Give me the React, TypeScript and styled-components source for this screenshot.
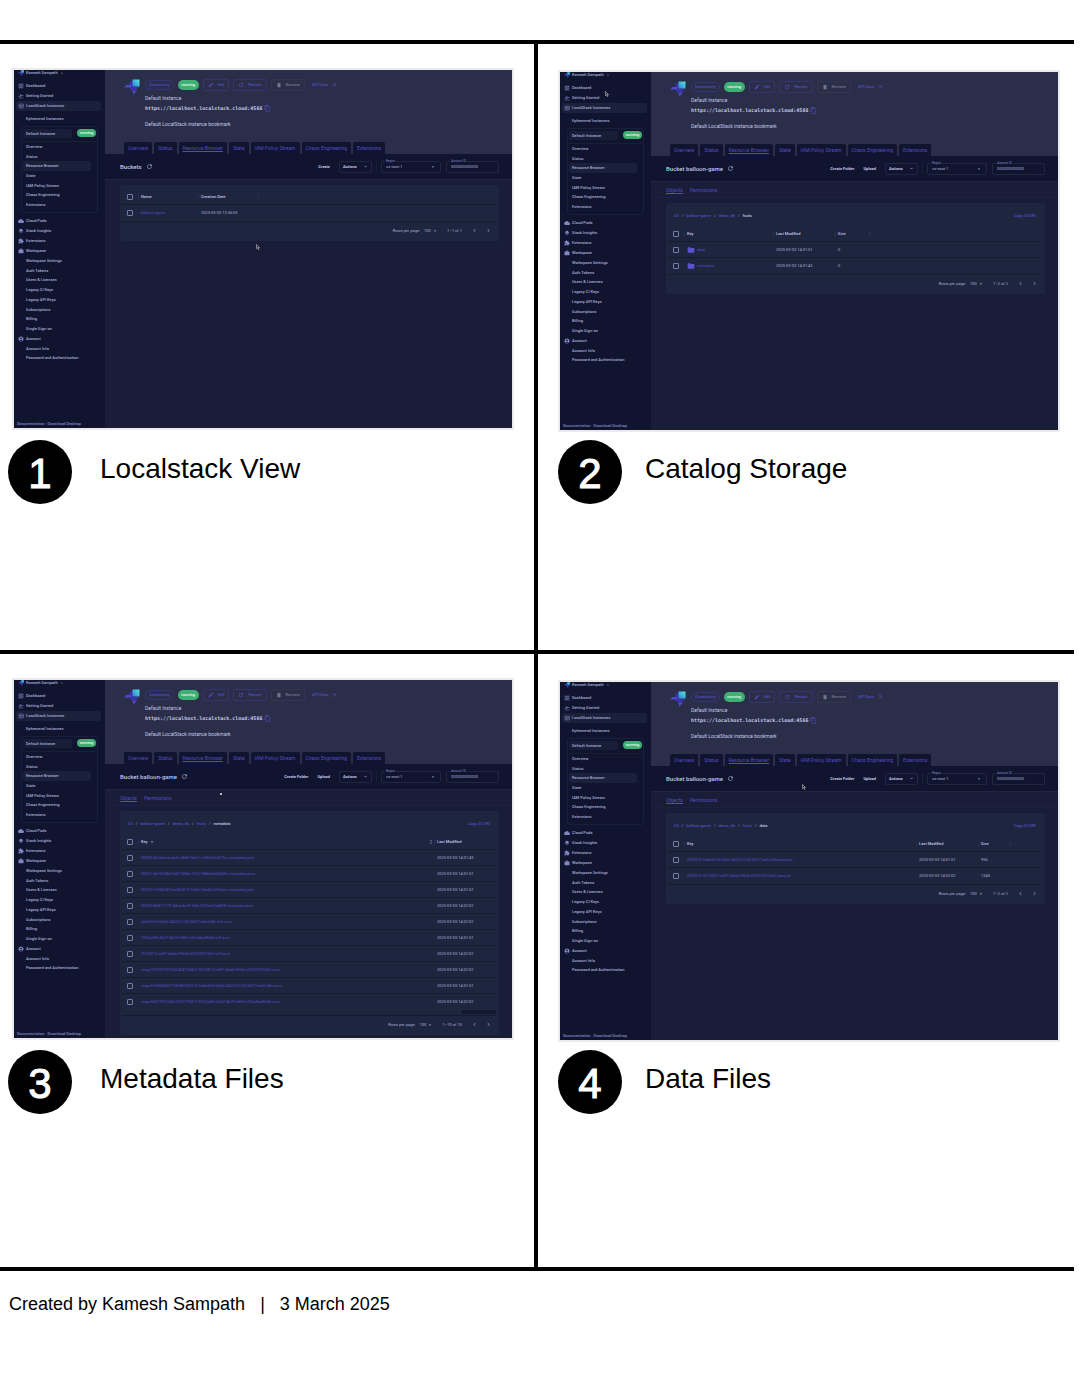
import React, { useId } from "react";
import styled, { createGlobalStyle, css } from "styled-components";
import {
  MdAccountCircle,
  MdArrowDropDown,
  MdArrowOutward,
  MdArrowUpward,
  MdChevronLeft,
  MdChevronRight,
  MdCloud,
  MdContentCopy,
  MdDelete,
  MdEdit,
  MdExtension,
  MdFlightTakeoff,
  MdFolder,
  MdKeyboardArrowDown,
  MdLayers,
  MdMoreVert,
  MdOutlineDashboard,
  MdOutlineTableChart,
  MdRefresh,
  MdWork,
} from "react-icons/md";

const c = {
  side: "#10142e",
  body: "#191d38",
  header: "#2b2e48",
  bar: "#10142e",
  card: "#1e253e",
  line: "#171b2e",
  edge: "#22273f",
  text: "#a9aed6",
  bright: "#c3c8ea",
  purple: "#564cc2",
  icon: "#8088c4",
  green: "#3fb073",
};

const Global = createGlobalStyle`
  * { box-sizing: border-box; }
  body { margin: 0; background: #fff; color: #000; font-family: "Liberation Sans", Arial, sans-serif; }
  button, input, select { font: inherit; color: inherit; background: none; border: 0; padding: 0; margin: 0; }
  h2, h3, p, ul, ol { margin: 0; padding: 0; }
  ul, ol { list-style: none; }
  a { color: inherit; text-decoration: none; }
  svg { display: block; flex: none; }
`;

/* ---------- storyboard page ---------- */

const Page = styled.main`
  padding: 40px 8px 0 0;
`;

const Board = styled.div`
  display: grid;
  grid-template-columns: calc(50% + 1px) 1fr;
  border-top: 4px solid #000;
  border-bottom: 4px solid #000;
`;

const Cell = styled.section<{ $right?: boolean; $last?: boolean }>`
  min-width: 0;
  min-height: ${(p) => (p.$last ? 613 : 610)}px;
  padding: ${(p) => (p.$right ? "26px 14px 0 20px" : "24px 20px 0 12px")};
  border-right: ${(p) => (p.$right ? 0 : 4)}px solid #000;
  border-bottom: ${(p) => (p.$last ? 0 : 4)}px solid #000;
`;

const Frame = styled.div`
  border: 2px solid #ebebeb;
`;

const Caption = styled.div<{ $right?: boolean }>`
  display: flex;
  align-items: center;
  gap: ${(p) => (p.$right ? 23 : 28)}px;
  margin: ${(p) => (p.$right ? "8px 0 0" : "10px 0 0 -4px")};
`;

const Badge = styled.span`
  display: flex;
  align-items: center;
  justify-content: center;
  width: 64px;
  height: 64px;
  border-radius: 50%;
  background: #000;
  color: #fff;
  font-size: 42px;
  line-height: 48px;
  padding-top: 4px;
  -webkit-text-stroke: 1px #fff;
`;

const Title = styled.h2`
  font-size: 28px;
  line-height: 32px;
  font-weight: 400;
  padding-bottom: 6px;
`;

const Credit = styled.footer`
  padding: 22px 9px 24px;
  font-size: 18px;
  line-height: 22px;
  white-space: pre;
`;

/* ---------- console screen ---------- */

const Screen = styled.div`
  position: relative;
  display: flex;
  aspect-ratio: 498 / 358;
  overflow: hidden;
  background: ${c.body};
  color: ${c.text};
  font: 4px/6px Roboto, sans-serif;
  white-space: nowrap;
`;

const Side = styled.nav`
  display: flex;
  flex-direction: column;
  flex: none;
  width: 91px;
  background: ${c.side};
  font-weight: 500;
`;

const User = styled.button`
  display: flex;
  align-items: center;
  gap: 2px;
  height: 6px;
  margin: 0 0 5px 4px;
`;

const NavItem = styled.a<{ $active?: boolean }>`
  display: flex;
  align-items: center;
  gap: 2px;
  height: 10px;
  margin: 0 4px 0 2px;
  padding-left: 2px;
  border-radius: 2px;
  background: ${(p) => (p.$active ? "#1b203b" : "transparent")};
  & > svg {
    color: ${c.icon};
  }
`;

const Ephemeral = styled.a`
  height: 15px;
  padding-left: 12px;
  line-height: 15px;
`;

const Group = styled.div`
  height: 87px;
  margin: 0 7px 3px;
  padding: 1px;
  border: 1px solid #1a1f3a;
  border-radius: 3px;
`;

const GroupHead = styled.div`
  display: flex;
  align-items: center;
  justify-content: space-between;
  height: 14px;
  padding-bottom: 3px;
  border-bottom: 1px solid #1a1f33;
`;

const GroupName = styled.a`
  width: 49px;
  height: 9px;
  padding-left: 3px;
  line-height: 9px;
  border-radius: 2px;
  background: #191e38;
`;

const Running = styled.span<{ $big?: boolean }>`
  display: flex;
  align-items: center;
  justify-content: center;
  width: ${(p) => (p.$big ? 21 : 19)}px;
  height: ${(p) => (p.$big ? 10 : 8)}px;
  border-radius: 5px;
  background: ${c.green};
  color: #eefaf3;
`;

const SubList = styled.ul<{ $height: number; $inset?: boolean }>`
  display: grid;
  grid-auto-rows: 1fr;
  height: ${(p) => p.$height}px;
  margin-left: ${(p) => (p.$inset ? 0 : 9)}px;
`;

const SubItem = styled.a<{ $active?: boolean }>`
  display: flex;
  align-items: center;
  width: 68px;
  height: 100%;
  padding-left: 3px;
  border-radius: 2px;
  background: ${(p) => (p.$active ? "#1b203b" : "transparent")};
`;

const SideFoot = styled.p`
  && {
    margin-top: auto;
  }
  height: 7px;
  padding-left: 3px;
  line-height: 5px;
  color: ${c.icon};
`;

const Main = styled.div`
  flex: 1;
  min-width: 0;
`;

const Header = styled.header`
  display: flex;
  flex-direction: column;
  height: 84px;
  padding: 9px 13px 0 19px;
  background: ${c.header};
`;

const HeadBody = styled.div`
  display: flex;
  gap: 5px;
`;

const HeadInfo = styled.div`
  display: flex;
  flex-direction: column;
  color: ${c.bright};
  font-size: 5px;
  line-height: 8px;
`;

const Chips = styled.div`
  display: flex;
  align-items: center;
  gap: 4px;
  height: 12px;
  margin-bottom: 3px;
  font-size: 4px;
  font-weight: 500;
`;

const Chip = styled.span`
  display: flex;
  align-items: center;
  height: 10px;
  padding: 0 3px;
  border: 1px solid #35337a;
  border-radius: 5px;
  color: ${c.purple};
`;

const HeadButton = styled.button<{ $muted?: boolean }>`
  display: flex;
  align-items: center;
  gap: 4px;
  height: 12px;
  padding: 0 4px;
  border: 1px solid ${(p) => (p.$muted ? "#33364f" : "#35346f")};
  border-radius: 2px;
  color: ${(p) => (p.$muted ? "#74778a" : c.purple)};
`;

const DocsLink = styled.a`
  display: flex;
  align-items: center;
  gap: 3px;
  padding-left: 3px;
  color: ${c.purple};
`;

const UrlRow = styled.div`
  display: flex;
  align-items: center;
  gap: 2px;
  height: 12px;
  margin-bottom: 6px;
  font-family: "DejaVu Sans Mono", monospace;
  font-weight: 700;
  & button {
    color: ${c.purple};
  }
`;

const Tabs = styled.div`
  display: flex;
  gap: 2px;
  margin-top: auto;
`;

const Tab = styled.a<{ $active?: boolean }>`
  height: 12px;
  padding: 0 4px;
  border-radius: 2px 2px 0 0;
  background: ${c.bar};
  color: ${c.purple};
  font-size: 5px;
  line-height: 13px;
  text-decoration: ${(p) => (p.$active ? "underline" : "none")};
`;

const Toolbar = styled.div`
  display: flex;
  align-items: center;
  height: 26px;
  padding: 0 13px 0 15px;
  background: ${c.bar};
  border-bottom: 1px solid ${c.edge};
`;

const Heading = styled.h3`
  font-size: 6px;
  font-weight: 500;
  line-height: 8px;
  color: ${c.bright};
`;

const Refresh = styled.button`
  margin: 0 auto 0 4px;
`;

const TextButton = styled.button`
  margin-right: 9px;
  color: ${c.bright};
  font-weight: 700;
`;

const Actions = styled.button`
  display: flex;
  align-items: center;
  justify-content: space-between;
  width: 33px;
  height: 12px;
  padding: 0 3px;
  border: 1px solid ${c.edge};
  border-radius: 2px;
  color: ${c.bright};
  font-weight: 700;
`;

const Split = styled.span`
  width: 1px;
  height: 11px;
  margin: 0 4px;
  background: #1a1f38;
`;

const Field = styled.div<{ $width: number }>`
  position: relative;
  display: flex;
  align-items: center;
  width: ${(p) => p.$width}px;
  height: 12px;
  padding: 0 4px;
  border: 1px solid ${c.edge};
  border-radius: 2px;
  & + & {
    margin-left: 5px;
  }
  & > label {
    position: absolute;
    top: -3px;
    left: 3px;
    padding: 0 1px;
    background: ${c.bar};
    font-size: 3px;
    line-height: 4px;
    color: ${c.icon};
  }
`;

const bareField = css`
  flex: 1;
  min-width: 0;
  height: 8px;
  appearance: none;
  outline: none;
`;

const Input = styled.input`
  ${bareField}
`;

const Select = styled.select`
  ${bareField}
`;

const SubTabs = styled.div`
  display: flex;
  gap: 7px;
  height: 16px;
  padding-left: 15px;
  border-bottom: 1px solid #1d213b;
  font-size: 5px;
  line-height: 16px;
  color: ${c.purple};
`;

const SubTab = styled.a<{ $active?: boolean }>`
  text-decoration: ${(p) => (p.$active ? "underline" : "none")};
`;

const Card = styled.div`
  margin: 5px 13px 0 15px;
  padding: 4px 3px 0 2px;
  border-radius: 2px;
  background: ${c.card};
`;

const CrumbRow = styled.div`
  display: flex;
  align-items: center;
  justify-content: space-between;
  height: 17px;
  margin-bottom: 2px;
  padding: 0 6px;
  color: ${c.purple};
  font-weight: 500;
`;

const Crumbs = styled.ol`
  display: flex;
  gap: 3px;
  & > li {
    display: flex;
    gap: 3px;
  }
  & i {
    font-style: normal;
    color: ${c.icon};
  }
  & li:last-child a {
    color: ${c.bright};
  }
`;

const Table = styled.table`
  width: 100%;
  table-layout: fixed;
  border-collapse: separate;
  border-spacing: 0;
  & tr {
    height: 16px;
  }
  & th,
  & td {
    padding: 0 0 0 3px;
    vertical-align: middle;
    text-align: left;
  }
  & th {
    font-weight: 500;
    color: ${c.bright};
  }
  & th,
  & tbody tr:not(:last-child) td {
    border-bottom: 1px solid ${c.line};
  }
`;

const Line = styled.span`
  display: flex;
  align-items: center;
  gap: 2px;
`;

const HeadLine = styled(Line)`
  margin-left: -3px;
  &::before {
    content: "";
    width: 1px;
    height: 4px;
    background: #2a3152;
  }
  & > svg:last-child {
    margin-left: auto;
  }
`;

const NameLink = styled.a`
  color: ${c.purple};
`;

const Check = styled.input`
  display: block;
  appearance: none;
  width: 6px;
  height: 6px;
  margin: 0 0 0 2px;
  border: 1px solid #747ca8;
  border-radius: 1px;
`;

const Scroll = styled.div`
  height: 5px;
  display: flex;
  justify-content: flex-end;
  &::after {
    content: "";
    width: 34px;
    height: 4px;
    background: #131830;
  }
`;

const Pager = styled.div`
  display: flex;
  align-items: center;
  justify-content: flex-end;
  height: 20px;
  padding: 0 4px 2px 0;
  border-top: 1px solid ${c.line};
  & > label {
    margin-right: 4px;
  }
  & > select {
    flex: none;
    width: 8px;
  }
  & > span {
    margin: 0 9px;
  }
  & > button {
    color: ${c.icon};
  }
  & > button + button {
    margin-left: 7px;
  }
`;

const Cursor = styled.svg<{ $x: number; $y: number }>`
  position: absolute;
  left: ${(p) => p.$x}%;
  top: ${(p) => p.$y}%;
`;

const Speck = styled.i`
  position: absolute;
  left: 41.4%;
  top: 31.6%;
  width: 2px;
  height: 2px;
  background: #b9b9c0;
`;

function Logo({ size }: { size: number }) {
  const id = useId();
  return (
    <svg width={size} height={size} viewBox="0 0 16 16" aria-hidden="true">
      <defs>
        <linearGradient id={id} x1="1" y1="0" x2="0" y2="1">
          <stop offset="0" stopColor="#55e6e0" />
          <stop offset="1" stopColor="#2f7fd8" />
        </linearGradient>
      </defs>
      <path d="M5.500 2.500H9V8h6l-3 3H7L5.500 8.500z" fill="#3a33ac" />
      <path d="M0 8.500L2.500 6H7v2.500z" fill="#5147cc" />
      <path d="M8.500.5H15.500v7h-7z" fill={`url(#${id})`} />
      <path d="M7.500 11.500h5.500L9 16v-3z" fill="#5147cc" />
    </svg>
  );
}

function Pointer({ x, y }: { x: number; y: number }) {
  return (
    <Cursor $x={x} $y={y} width="4" height="6" viewBox="0 0 8 12" aria-hidden="true">
      <path d="M1 1v8l2-2 1.500 4 1.500-.6L4.500 7H7z" fill="#111" stroke="#c8c8d0" strokeWidth="1.200" />
    </Cursor>
  );
}

const detailPages = ["Overview", "Status", "Resource Browser", "State", "IAM Policy Stream", "Chaos Engineering", "Extensions"];
const workspacePages = [
  "Workspace Settings",
  "Auth Tokens",
  "Users & Licenses",
  "Legacy CI Keys",
  "Legacy API Keys",
  "Subscriptions",
  "Billing",
  "Single Sign-on",
];

function SubNav({ items, height, inset }: { items: string[]; height: number; inset?: boolean }) {
  return (
    <SubList $height={height} $inset={inset}>
      {items.map((item) => (
        <li key={item}>
          <SubItem href="#" $active={item === "Resource Browser"}>
            {item}
          </SubItem>
        </li>
      ))}
    </SubList>
  );
}

function Sidebar() {
  return (
    <Side>
      <User>
        <Logo size={6} />
        Kamesh Sampath
        <MdKeyboardArrowDown />
      </User>
      <NavItem href="#"><MdOutlineDashboard size={6} />Dashboard</NavItem>
      <NavItem href="#"><MdFlightTakeoff size={6} />Getting Started</NavItem>
      <NavItem href="#" $active><MdOutlineTableChart size={6} />LocalStack Instances</NavItem>
      <Ephemeral href="#">Ephemeral Instances</Ephemeral>
      <Group>
        <GroupHead>
          <GroupName href="#">Default Instance</GroupName>
          <Running>running</Running>
        </GroupHead>
        <SubNav items={detailPages} height={68} inset />
      </Group>
      <NavItem href="#"><MdCloud size={6} />Cloud Pods</NavItem>
      <NavItem href="#"><MdLayers size={6} />Stack Insights</NavItem>
      <NavItem href="#"><MdExtension size={6} />Extensions</NavItem>
      <NavItem href="#"><MdWork size={6} />Workspace</NavItem>
      <SubNav items={workspacePages} height={78} />
      <NavItem href="#"><MdAccountCircle size={6} />Account</NavItem>
      <SubNav items={["Account Info", "Password and Authentication"]} height={19} />
      <SideFoot>
        <a href="#">Documentation</a> · <a href="#">Download Desktop</a>
      </SideFoot>
    </Side>
  );
}

function InstanceHeader() {
  return (
    <Header>
      <HeadBody>
        <Logo size={16} />
        <HeadInfo>
          <Chips>
            <Chip>Community</Chip>
            <Running $big>running</Running>
            <HeadButton><MdEdit size={6} />Edit</HeadButton>
            <HeadButton><MdRefresh size={6} />Restart</HeadButton>
            <HeadButton $muted><MdDelete size={6} />Remove</HeadButton>
            <DocsLink href="#">API Docs<MdArrowOutward size={6} /></DocsLink>
          </Chips>
          <p>Default Instance</p>
          <UrlRow>
            https://localhost.localstack.cloud:4566
            <button aria-label="Copy endpoint"><MdContentCopy size={7} /></button>
          </UrlRow>
          <p>Default LocalStack instance bookmark</p>
        </HeadInfo>
      </HeadBody>
      <Tabs>
        {detailPages.map((page) => (
          <Tab href="#" key={page} $active={page === "Resource Browser"}>
            {page}
          </Tab>
        ))}
      </Tabs>
    </Header>
  );
}

type Column = { label: string; width?: number; sorted?: boolean };
type Row = { name: string; cells: string[] };
type View = {
  title: string;
  heading: string;
  actions: string[];
  path?: string[];
  columns: Column[];
  rows: Row[];
  folders?: boolean;
  scroll?: boolean;
  range: string;
  pointer?: [number, number];
};

function Console({ view }: { view: View }) {
  const id = useId();
  return (
    <Screen>
      <Sidebar />
      <Main>
        <InstanceHeader />
        <Toolbar>
          <Heading>{view.heading}</Heading>
          <Refresh aria-label="Refresh"><MdRefresh size={7} /></Refresh>
          {view.actions.map((action) => (
            <TextButton key={action}>{action}</TextButton>
          ))}
          <Actions>Actions<MdKeyboardArrowDown size={5} /></Actions>
          <Split />
          <Field $width={60}>
            <label htmlFor={`${id}region`}>Region</label>
            <Select id={`${id}region`}><option>us-east-1</option></Select>
            <MdArrowDropDown size={6} />
          </Field>
          <Field $width={53}>
            <label htmlFor={`${id}account`}>Account ID</label>
            <Input id={`${id}account`} defaultValue="000000000000" />
          </Field>
        </Toolbar>
        {view.path && (
          <SubTabs>
            <SubTab href="#" $active>Objects</SubTab>
            <SubTab href="#">Permissions</SubTab>
          </SubTabs>
        )}
        <Card>
          {view.path && (
            <CrumbRow>
              <Crumbs>
                {view.path.map((part, i) => (
                  <li key={part}>
                    {i > 0 && <i>/</i>}
                    <a href="#">{part}</a>
                  </li>
                ))}
              </Crumbs>
              <button>Copy S3 URI</button>
            </CrumbRow>
          )}
          <Table>
            <colgroup>
              <col width={16} />
              {view.columns.map((col, i) => (
                <col key={i} width={col.width} />
              ))}
            </colgroup>
            <thead>
              <tr>
                <th><Check type="checkbox" aria-label="Select all rows" /></th>
                {view.columns.map((col, i) => (
                  <th key={i}>
                    <HeadLine>
                      {col.label}
                      {col.sorted && <MdArrowUpward size={4} />}
                      {col.sorted && <MdMoreVert size={6} />}
                    </HeadLine>
                  </th>
                ))}
              </tr>
            </thead>
            <tbody>
              {view.rows.map((row) => (
                <tr key={row.name}>
                  <td><Check type="checkbox" aria-label={`Select ${row.name}`} /></td>
                  <td>
                    <Line>
                      {view.folders && <MdFolder size={8} color="#5b50d0" />}
                      <NameLink href="#">{row.name}</NameLink>
                    </Line>
                  </td>
                  {row.cells.map((cell, i) => (
                    <td key={i}>{cell}</td>
                  ))}
                  {view.columns.length > row.cells.length + 1 && <td />}
                </tr>
              ))}
            </tbody>
          </Table>
          {view.scroll && <Scroll />}
          <Pager>
            <label htmlFor={`${id}rows`}>Rows per page:</label>
            <Select id={`${id}rows`}><option>100</option></Select>
            <MdArrowDropDown size={6} />
            <span>{view.range}</span>
            <button aria-label="Previous page"><MdChevronLeft size={7} /></button>
            <button aria-label="Next page"><MdChevronRight size={7} /></button>
          </Pager>
        </Card>
      </Main>
      {view.pointer ? <Pointer x={view.pointer[0]} y={view.pointer[1]} /> : <Speck />}
    </Screen>
  );
}

const bucketHeading = "Bucket balloon-game";
const bucketActions = ["Create Folder", "Upload"];
const root = ["S3", "balloon-game", "demo_db", "fruits"];

const views: View[] = [
  {
    title: "Localstack View",
    heading: "Buckets",
    actions: ["Create"],
    columns: [{ label: "Name", width: 60 }, { label: "Creation Date", width: 60 }, { label: "" }],
    rows: [{ name: "balloon-game", cells: ["2025-03-03 13:36:05"] }],
    range: "1–1 of 1",
    pointer: [48.5, 48.6],
  },
  {
    title: "Catalog Storage",
    heading: bucketHeading,
    actions: bucketActions,
    path: root,
    columns: [
      { label: "Key", width: 89 },
      { label: "Last Modified", width: 62 },
      { label: "Size", width: 34 },
      { label: "" },
    ],
    rows: [
      { name: "data", cells: ["2025-03-03 14:01:51", "0"] },
      { name: "metadata", cells: ["2025-03-03 14:01:43", "0"] },
    ],
    folders: true,
    range: "1–2 of 2",
    pointer: [9, 5.2],
  },
  {
    title: "Metadata Files",
    heading: bucketHeading,
    actions: bucketActions,
    path: [...root, "metadata"],
    columns: [{ label: "Key", sorted: true }, { label: "Last Modified", width: 62 }],
    rows: [
      { name: "00000-42fa6ee6-ac5e-4b87-bbc2-e78e60e4776c.metadata.json", cells: ["2025-03-03 14:01:43"] },
      { name: "00001-46f90084-3a87-40b6-9167-888bbb040d0c.metadata.json", cells: ["2025-03-03 14:01:51"] },
      { name: "00002-f7684740-6a08-417f-b0bb-63a42c39a5ce.metadata.json", cells: ["2025-03-03 14:01:57"] },
      { name: "00003-8b812179-44ca-4ef9-9dfe-053eaf2a4838.metadata.json", cells: ["2025-03-03 14:02:02"] },
      { name: "5abb3f2d-b0bb-4420-b124-0b071aeb2d8e-m0.avro", cells: ["2025-03-03 14:02:02"] },
      { name: "9352af85-45d7-4b70-b8f0-c3f2a8ad83d6-m0.avro", cells: ["2025-03-03 14:01:51"] },
      { name: "f91f0812-ed97-4dab-9064-a50f33931662-m0.avro", cells: ["2025-03-03 14:02:02"] },
      { name: "snap-2792079076414047044-0-f91f0812-ed97-4dab-9064-a50f33931662.avro", cells: ["2025-03-03 14:02:02"] },
      { name: "snap-6168060471569800432-0-5abb3f2d-b0bb-4420-b124-0b071aeb2d8e.avro", cells: ["2025-03-03 14:01:51"] },
      { name: "snap-6601992246635537950-0-9352af85-45d7-4b70-b8f0-c3f2a8ad83d6.avro", cells: ["2025-03-03 14:02:02"] },
    ],
    scroll: true,
    range: "1–10 of 10",
  },
  {
    title: "Data Files",
    heading: bucketHeading,
    actions: bucketActions,
    path: [...root, "data"],
    columns: [
      { label: "Key" },
      { label: "Last Modified", width: 62 },
      { label: "Size", width: 32 },
      { label: "", width: 32 },
    ],
    rows: [
      { name: "00000-0-5abb3f2d-b0bb-4420-b124-0b071aeb2d8e.parquet", cells: ["2025-03-03 14:01:51", "956"] },
      { name: "00000-0-f91f0812-ed97-4dab-9064-a50f33931662.parquet", cells: ["2025-03-03 14:02:02", "1345"] },
    ],
    range: "1–2 of 2",
    pointer: [48.6, 28.4],
  },
];

export default function App() {
  return (
    <>
      <Global />
      <Page>
        <Board>
          {views.map((view, i) => (
            <Cell key={view.title} $right={i % 2 === 1} $last={i > 1}>
              <Frame>
                <Console view={view} />
              </Frame>
              <Caption $right={i % 2 === 1}>
                <Badge>{i + 1}</Badge>
                <Title>{view.title}</Title>
              </Caption>
            </Cell>
          ))}
        </Board>
        <Credit>{"Created by Kamesh Sampath   |   3 March 2025"}</Credit>
      </Page>
    </>
  );
}
